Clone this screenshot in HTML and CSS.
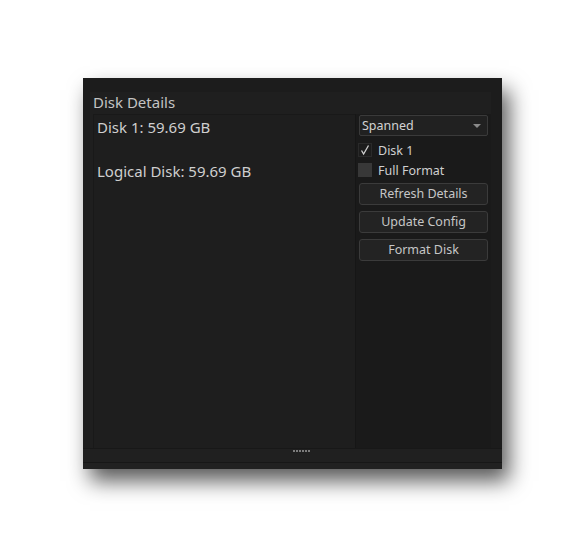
FILE: index.html
```html
<!DOCTYPE html>
<html>
<head>
<meta charset="utf-8">
<link rel="stylesheet" href="styles.css">
</head>
<body>
<div class="window">
  <div class="panel">
    <div class="title">Disk Details</div>
    <div class="content">
      <div class="list">
        <div class="item">Disk 1: 59.69 GB</div>
        <div class="item gap">Logical Disk: 59.69 GB</div>
      </div>
      <div class="side">
        <div class="combo"><span>Spanned</span><span class="arrow"></span></div>
        <label class="check"><span class="box checked"><svg width="12" height="12" viewBox="0 0 12 12"><path d="M2.5 6.5 L4.6 10 L9.5 1.5" fill="none" stroke="#cfcfcf" stroke-width="1.3"/></svg></span>Disk 1</label>
        <label class="check"><span class="box filled"></span>Full Format</label>
        <div class="btn first">Refresh Details</div>
        <div class="btn">Update Config</div>
        <div class="btn">Format Disk</div>
      </div>
    </div>
  </div>
  <div class="footer"><div class="grip"><i></i><i></i><i></i><i></i><i></i><i></i></div></div>
  <div class="status"></div>
</div>
</body>
</html>
```
FILE: styles.css
```css
html, body { margin: 0; padding: 0; background: #ffffff; }
body { font-family: "Noto Sans", "Open Sans", sans-serif; min-height: 547px; padding-top: 78px; box-sizing: border-box; }
.window {
  margin: 0 0 0 83px;
  width: 419px;
  height: 391px;
  background: #1c1c1c;
  box-shadow: 7px 12px 20px rgba(0,0,0,0.65);
  display: flex;
  flex-direction: column;
  padding-top: 14px;
  box-sizing: border-box;
}
.panel {
  margin: 0 11px 0 7px;
  height: 356px;
  background: #1f1f1f;
  display: flex;
  flex-direction: column;
}
.title {
  height: 22px;
  padding-left: 3px;
  font-size: 15px;
  line-height: 21px;
  color: #c4c4c4;
}
.content { flex: 1; display: flex; }
.list {
  width: 262px;
  margin-left: 3px;
  background: #1e1e1e;
  border-left: 1px solid #191919;
  border-top: 1px solid #191919;
  box-sizing: border-box;
  padding: 1px 0 0 3px;
}
.item { font-size: 15px; line-height: 22px; color: #cfcfcf; }
.item.gap { margin-top: 22px; }
.side {
  width: 136px;
  background: #1a1a1a;
  border-left: 1px solid #161616;
  box-sizing: border-box;
  padding: 1px 0 0 3px;
  display: flex;
  flex-direction: column;
}
.combo {
  width: 129px;
  height: 21px;
  box-sizing: border-box;
  border: 1px solid #3a3a3a;
  border-radius: 2px;
  background: #212121;
  display: flex;
  align-items: center;
  justify-content: space-between;
  padding: 0 6px 0 2px;
  font-size: 12.5px;
  color: #d2d2d2;
}
.arrow {
  width: 0; height: 0;
  border-left: 4px solid transparent;
  border-right: 4px solid transparent;
  border-top: 4px solid #8a8a8a;
}
.check {
  display: flex;
  align-items: center;
  height: 20px;
  font-size: 12.5px;
  color: #cfcfcf;
  margin-left: -1px;
}
.check:first-of-type { margin-top: 4px; }
.box {
  width: 14px; height: 14px;
  box-sizing: border-box;
  margin-right: 6px;
  display: flex;
  align-items: center;
  justify-content: center;
}
.box.checked { border: 1px solid #2a2a2a; background: #1c1c1c; }
.box.filled { background: #383838; }
.btn {
  width: 129px;
  height: 22px;
  box-sizing: border-box;
  border: 1px solid #3b3b3b;
  border-radius: 3px;
  background: #232323;
  font-size: 12.5px;
  line-height: 20px;
  text-align: center;
  color: #c6c6c6;
  margin-top: 6px;
}
.btn.first { margin-top: 3px; }
.footer {
  height: 14px;
  background: #202020;
  border-top: 1px solid #181818;
  box-sizing: border-box;
  display: flex;
  justify-content: center;
  padding-top: 1px;
}
.grip { display: flex; gap: 1px; height: 2px; margin-left: 18px; }
.grip i { width: 2px; height: 2px; background: #7c7c7c; display: block; }
.status {
  flex: 1;
  background: #212121;
  border-top: 1px solid #171717;
}
```
